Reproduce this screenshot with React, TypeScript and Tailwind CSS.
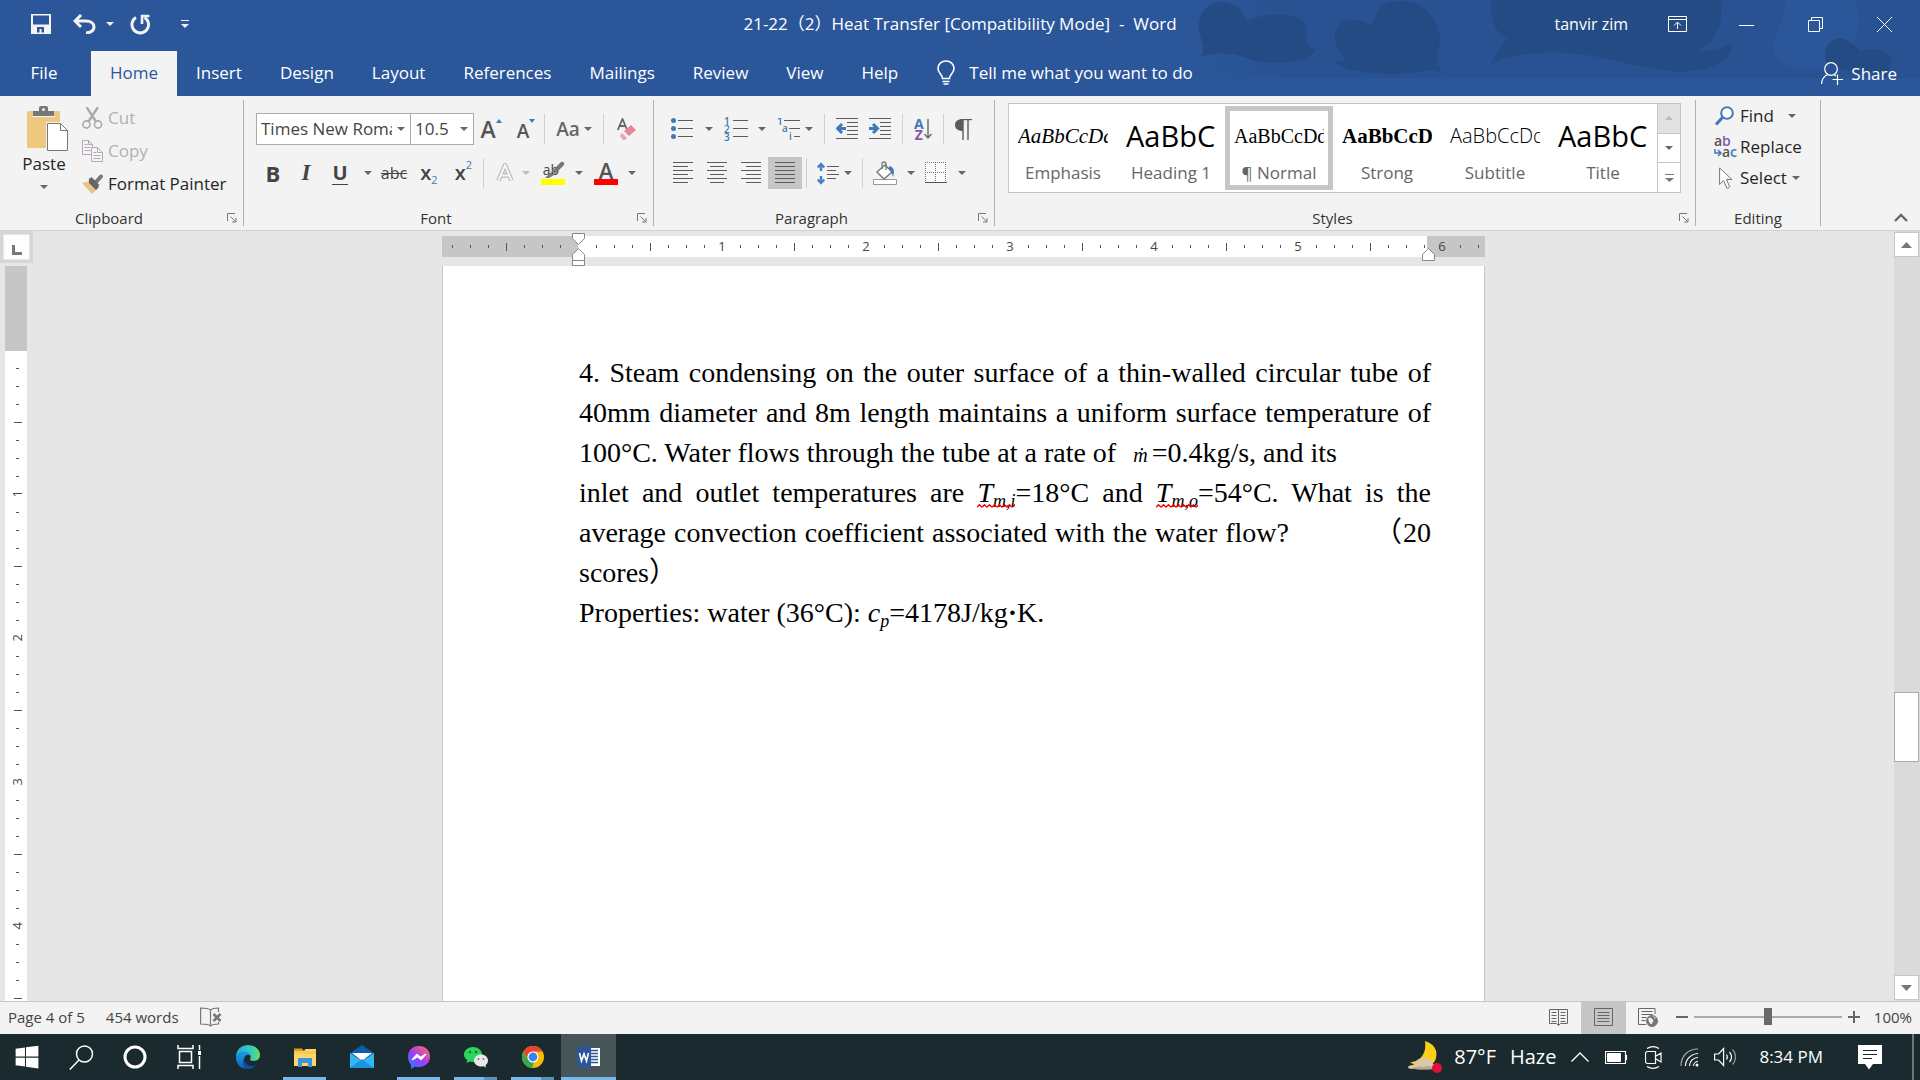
import { useState, type ReactNode } from 'react'
import { FaWindows } from 'react-icons/fa'

const TABS = ['Home', 'Insert', 'Design', 'Layout', 'References', 'Mailings', 'Review', 'View', 'Help']

const STYLES = [
  { name: 'Emphasis', sample: 'AaBbCcDd', cls: 'font-["Liberation_Serif",serif] italic text-[21px]' },
  { name: 'Heading 1', sample: 'AaBbCc', cls: 'text-[29px]' },
  { name: '¶ Normal', sample: 'AaBbCcDd', cls: 'font-["Liberation_Serif",serif] text-[20px]' },
  { name: 'Strong', sample: 'AaBbCcD', cls: 'font-["Liberation_Serif",serif] font-bold text-[21px]' },
  { name: 'Subtitle', sample: 'AaBbCcDd', cls: 'font-light text-[20px]' },
  { name: 'Title', sample: 'AaBbCc', cls: 'text-[29px]' },
]

const rowCls = 'flex items-center h-8'

function Caret({ className = 'text-[#666]' }: { className?: string }) {
  return (
    <svg width="8" height="4" viewBox="0 0 8 4" className={`shrink-0 ${className}`} fill="currentColor">
      <path d="M0 0h8L4 4z" />
    </svg>
  )
}

function Sep() {
  return <div className="w-px h-[30px] bg-[#d0d0d0] shrink-0" />
}

function Tool({ label, className = '', children }: { label: string; className?: string; children: ReactNode }) {
  return (
    <button type="button" aria-label={label} className={`flex items-center shrink-0 h-8 ${className}`}>
      {children}
    </button>
  )
}

interface GroupProps {
  title: string
  className: string
  launcher?: boolean
  children: ReactNode
}

function Group({ title, className, launcher = true, children }: GroupProps) {
  return (
    <section className={`flex flex-col shrink-0 border-r border-[#b1b1b1] ${className}`}>
      <div className="flex-1 min-h-0">{children}</div>
      <div className="flex items-center h-4">
        <span className="flex-1 text-center text-[15px] leading-4 text-[#333]">{title}</span>
        {launcher && (
          <button type="button" aria-label={`${title} settings`} className="w-[25px] pl-[9px]">
            <svg width="10" height="10" viewBox="0 0 10 10" stroke="#777" fill="none">
              <path d="M.5 8V.5H8M3.5 3.5l5 5M9 5v4H5" />
            </svg>
          </button>
        )}
      </div>
    </section>
  )
}

function Lines({ rows, width = 22 }: { rows: [number, number, number][]; width?: number }) {
  return (
    <svg width={width} height="22" viewBox={`0 0 ${width} 22`} stroke="#5c5c5c" shapeRendering="crispEdges">
      {rows.map(([x1, x2, y]) => (
        <path key={y} d={`M${x1} ${y}.5H${x2}`} />
      ))}
    </svg>
  )
}

/* ---------- title bar ---------- */

function TitleBar() {
  return (
    <div className="relative flex items-center justify-between h-[51px] pb-[3px]">
      <div className="flex items-center pl-[31px] text-white">
        <button type="button" aria-label="Save">
          <svg width="20" height="20" viewBox="0 0 20 20" fill="#f3f3f3">
            <path d="M0 0h20v20H0zM2 1.500v9h16v-9zM6 13v5.500h2.500V15h2v3.500H13V13z" fillRule="evenodd" />
          </svg>
        </button>
        <button type="button" aria-label="Undo" className="ml-[22px]">
          <svg width="23" height="20" viewBox="0 0 23 20" fill="none" stroke="#f3f3f3" strokeWidth="3">
            <path d="M8 1L2 7l6 6M2 7h11c5 0 8 2.500 8 6s-3 5.500-8 6" />
          </svg>
        </button>
        <button type="button" aria-label="Undo history" className="ml-[10px]"><Caret className="text-[#f3f3f3]" /></button>
        <button type="button" aria-label="Repeat" className="ml-[16px]">
          <svg width="21" height="21" viewBox="0 0 21 21" fill="none" stroke="#f3f3f3" strokeWidth="3">
            <path d="M6 3.500a8.300 8.300 0 1 0 8.500 0" />
            <path d="M19.500 2H12v8" strokeWidth="2.600" />
          </svg>
        </button>
        <button type="button" aria-label="Customize toolbar" className="ml-[30px]">
          <svg width="8" height="8" viewBox="0 0 8 8" fill="#f3f3f3"><path d="M0 0h8v1H0zM0 4h8L4 8z" /></svg>
        </button>
      </div>
      <div className="absolute inset-x-0 top-0 h-12 flex items-center justify-center pointer-events-none text-[17px] text-white whitespace-pre">
        21-22（2）Heat Transfer [Compatibility Mode]  -  Word
      </div>
      <div className="flex items-center pr-[28px] text-white text-[16px]">
        <span>tanvir zim</span>
        <button type="button" aria-label="Ribbon display options" className="ml-[40px]">
          <svg width="19" height="16" viewBox="0 0 19 16" fill="none" stroke="white">
            <path d="M.5.5h18v15H.5zM.5 3.500h18M9.500 13V6.500M6 9.500l3.500-3.500L13 9.500" />
          </svg>
        </button>
        <button type="button" aria-label="Minimize" className="ml-[52px]">
          <svg width="15" height="15" viewBox="0 0 15 15" stroke="white"><path d="M0 8.500h15" /></svg>
        </button>
        <button type="button" aria-label="Restore" className="ml-[54px]">
          <svg width="15" height="15" viewBox="0 0 15 15" fill="none" stroke="white">
            <path d="M.5 3.500h11v11H.5zM3.500 3.500v-3h11v11h-3" />
          </svg>
        </button>
        <button type="button" aria-label="Close" className="ml-[54px]">
          <svg width="15" height="15" viewBox="0 0 15 15" stroke="white"><path d="M0 0l15 15M15 0L0 15" /></svg>
        </button>
      </div>
    </div>
  )
}

function Clouds() {
  return (
    <svg width="730" height="78" viewBox="0 0 730 78" className="absolute right-0 top-0" fill="#254b85">
      <defs>
        <linearGradient id="haze" x1="0" x2="1">
          <stop offset="0" stopColor="#2b579a" />
          <stop offset=".15" stopColor="#285291" />
          <stop offset="1" stopColor="#285291" />
        </linearGradient>
      </defs>
      <path d="M0 0h730v78H0z" fill="url(#haze)" />
      <path d="M10 57c6-8 3-12 0-22C4 12 22-4 42 4c10 4 12 14 16 16 20-8 50-8 58 4 0 16-2 22 10 26-8 12-40 16-64 10-20-8-34-8-52-3z" />
      <path d="M144 60c4 2 8 2 12-1-14-12-16-34 0-38 10-3 20 0 24 5 8-8 4-22 26-25 30-4 52 26 41 52 0 8 2 14 5 20-14-6-26 2-52 1-30-1-50-4-56-14z" />
      <path d="M302 0h228c4 20-2 42-22 50 14 2 24-2 34-7 1 12-14 26-40 28-50 4-90-22-150-18-20 1-38 4-51 12 4-10 8-16 16-26-12-6-18-22-15-39z" />
      <path d="M595 0h70c10 20 0 50-16 62-20 14-64 8-66-12-2-16 14-30 12-50z" fill="#2b579a" />
      <path d="M636 62c-4-22 12-28 24-20 6 4 8 6 10 10 10-6 24-2 30 4 4 6-2 14-4 22-14-8-40-2-60-16z" />
    </svg>
  )
}

function TabStrip() {
  const [active, setActive] = useState('Home')
  return (
    <nav className="relative flex items-stretch h-[45px] text-[17px] text-white">
      <button type="button" className="w-[88px] mr-[3px] pb-[2px]">File</button>
      {TABS.map(t => (
        <button
          key={t}
          type="button"
          onClick={() => setActive(t)}
          className={`px-[19px] pb-[2px] ${t === active ? 'bg-[#f3f3f3] text-[#2b579a]' : ''}`}
        >
          {t}
        </button>
      ))}
      <button type="button" className="flex items-center gap-[14px] ml-5 pb-[2px]">
        <svg width="18" height="25" viewBox="0 0 18 25" fill="none" stroke="white" strokeWidth="1.600">
          <path d="M5.500 18.500c0-4-4.500-5-4.500-10C1 4 4.500 1 9 1s8 3 8 7.500c0 5-4.500 6-4.500 10zM5.500 21.500h7M6.500 24h5" />
        </svg>
        Tell me what you want to do
      </button>
      <button type="button" className="flex items-center gap-2 ml-auto pr-[23px]">
        <svg width="22" height="23" viewBox="0 0 22 23" fill="none" stroke="white" strokeWidth="1.200">
          <circle cx="10" cy="7" r="6.300" />
          <path d="M.6 22c0-5 3-8 6-9.500M13 12.500l2 1.500M16.500 12.500v10.500M11.500 17.500H22" />
        </svg>
        Share
      </button>
    </nav>
  )
}

/* ---------- ribbon ---------- */

function ClipboardGroup() {
  return (
    <Group title="Clipboard" className="w-[244px]">
      <div className="flex pt-px">
        <button type="button" className="flex flex-col items-center w-[82px] pl-[6px] pt-[5px] text-[17px] leading-[24px] text-[#262626]">
          <svg width="50" height="46" viewBox="-8 0 50 46" fill="none">
            <rect x="0" y="5" width="33" height="37" rx="1.500" fill="#edc87e" />
            <path d="M6 10V5h6V2a2 2 0 0 1 2-2h5a2 2 0 0 1 2 2v3h6v5z" fill="#777" />
            <path d="M5 10.500h23" stroke="#f3f3f3" />
            <circle cx="16.500" cy="3.500" r="1.500" fill="#f3f3f3" />
            <path d="M19 16h22v30H19z" fill="#f3f3f3" />
            <path d="M20.500 17.500h13l7 7v20h-20z" fill="white" stroke="#777" />
            <path d="M33.500 17.500v7h7" stroke="#777" />
          </svg>
          Paste
          <span className="mt-[9px]"><Caret /></span>
        </button>
        <div className="flex flex-col text-[17px] text-[#262626]">
          <button type="button" disabled className="flex items-center gap-[5px] h-[33px] text-[#b1b1b1]">
            <svg width="21" height="22" viewBox="0 0 21 22" fill="none" stroke="#aaa" strokeWidth="1.600">
              <circle cx="4.500" cy="17.500" r="3.600" /><circle cx="16" cy="17.500" r="3.600" />
              <path d="M4.500 0l9.500 14.500M16 0L6.500 14.500" strokeWidth="2.400" />
            </svg>
            Cut
          </button>
          <button type="button" disabled className="flex items-center gap-[5px] h-[33px] text-[#b1b1b1]">
            <svg width="21" height="22" viewBox="0 0 21 22" fill="#f7f2f8" stroke="#b3a9b6">
              <path d="M.5.500h6l4 4v10H.500zM6.500.500v4h4M2.500 4.500h3M2.500 7.500h6M2.500 10.500h6" />
              <path d="M9.500 7.500h6l5 5v9h-11zM15.500 7.500v5h5M11.500 12.500h3M11.500 15.500h7M11.500 18.500h7" />
            </svg>
            Copy
          </button>
          <button type="button" className="flex items-center gap-[5px] h-[33px]">
            <svg width="21" height="20" viewBox="0 0 21 20">
              <path d="M0 9l8-2 8 7-6 6z" fill="#ebc382" />
              <path d="M7 4l10 9-3 3L7 9z" fill="#666" />
              <path d="M13.500 8.500L19 2.500" stroke="#777" strokeWidth="4" strokeLinecap="round" />
              <path d="M8 4.500l8 8" stroke="#666" strokeWidth="4" />
            </svg>
            Format Painter
          </button>
        </div>
      </div>
    </Group>
  )
}

function FontGroup() {
  return (
    <Group title="Font" className="w-[410px]">
      <div className="flex flex-col gap-3 pt-[13px] pl-3">
        <div className={rowCls}>
          <div className="relative flex items-center w-[155px]">
            <select aria-label="Font" className="appearance-none w-full h-8 pl-1 pr-[18px] bg-white border border-[#ababab] text-[17px] text-[#444]">
              <option>Times New Roman</option>
            </select>
            <span className="absolute right-[6px] pointer-events-none"><Caret /></span>
          </div>
          <div className="relative flex items-center w-[64px] -ml-px">
            <select aria-label="Font size" className="appearance-none w-full h-8 pl-1 bg-white border border-[#ababab] text-[17px] text-[#444]">
              <option>10.5</option>
            </select>
            <span className="absolute right-[6px] pointer-events-none"><Caret /></span>
          </div>
          <Tool label="Grow font" className="w-[34px] justify-center font-semibold text-[#555]">
            <span className="text-[23px] leading-8">A</span>
            <svg width="6" height="20" viewBox="0 0 6 20" fill="#3b7abf"><path d="M0 4h6L3 0z" /></svg>
          </Tool>
          <Tool label="Shrink font" className="w-[36px] justify-center font-semibold text-[#555]">
            <span className="text-[19px] leading-8 pt-1">A</span>
            <svg width="6" height="20" viewBox="0 0 6 20" fill="#3b7abf"><path d="M0 0h6L3 4z" /></svg>
          </Tool>
          <Sep />
          <Tool label="Change case" className="w-[58px] justify-center gap-1 text-[19px] font-semibold text-[#666]">
            Aa<Caret />
          </Tool>
          <Sep />
          <Tool label="Clear formatting" className="w-[46px] justify-center">
            <svg width="20" height="22" viewBox="0 0 20 22" fill="none">
              <path d="M.8 12L5.500 1l4.200 10M2.500 8h6" stroke="#666" strokeWidth="1.800" />
              <path d="M14 7l5 5-7 6-5-5z" fill="#e8849a" />
              <path d="M5 15l5 5-2 2H6l-3-4z" fill="#eda3b3" />
            </svg>
          </Tool>
        </div>
        <div className={`${rowCls} text-[#444]`}>
          <Tool label="Bold" className="w-[34px] justify-center text-[22px] font-bold">B</Tool>
          <Tool label="Italic" className="w-[32px] justify-center text-[23px] font-bold italic font-['Liberation_Serif',serif]">I</Tool>
          <Tool label="Underline" className="w-[36px] justify-center">
            <span className="text-[20px] leading-[22px] font-bold border-b border-[#444]">U</span>
          </Tool>
          <Tool label="Underline style" className="w-[20px] justify-center"><Caret /></Tool>
          <Tool label="Strikethrough" className="w-[32px] justify-center text-[16px] line-through">abc</Tool>
          <Tool label="Subscript" className="w-[38px] justify-center">
            <span className="text-[20px] font-semibold">x</span><span className="pt-[14px] text-[11px] text-[#3b7abf]">2</span>
          </Tool>
          <Tool label="Superscript" className="w-[31px] justify-center">
            <span className="text-[20px] font-semibold">x</span><span className="pb-[16px] text-[11px] text-[#3b7abf]">2</span>
          </Tool>
          <div className="flex items-center pl-1">
            <Sep />
            <Tool label="Text effects" className="w-[57px] justify-center gap-2">
              <svg width="18" height="20" viewBox="0 0 18 20" fill="none" strokeLinejoin="round">
                <path d="M2.500 17.500L9 2l6.500 15.500M5 12.500h8" stroke="#bbb" strokeWidth="4.500" />
                <path d="M2.500 17.500L9 2l6.500 15.500M5 12.500h8" stroke="#f6f6f6" strokeWidth="2" />
              </svg>
              <Caret className="text-[#bbb]" />
            </Tool>
            <Tool label="Highlight color" className="w-[42px] justify-between">
              <span className="relative flex flex-col">
                <span className="text-[14px] leading-[18px] pr-1">ab</span>
                <span className="w-6 h-[6px] bg-[#ff0]" />
                <svg width="20" height="18" viewBox="0 0 20 18" className="absolute left-1 top-0" fill="#777">
                  <path d="M7 10L16 1c2-1 4 1 3 3l-9 9zM6 11l3 3-5 3H0z" />
                </svg>
              </span>
              <Caret />
            </Tool>
            <Tool label="Font color" className="w-[42px] ml-[11px] justify-between">
              <span className="flex flex-col items-center">
                <span className="text-[22px] leading-[18px] font-semibold text-[#555]">A</span>
                <span className="w-6 h-[6px] bg-[#f00]" />
              </span>
              <Caret />
            </Tool>
          </div>
        </div>
      </div>
    </Group>
  )
}

function ParagraphGroup() {
  return (
    <Group title="Paragraph" className="w-[341px]">
      <div className="flex flex-col gap-3 pt-[13px] pl-3">
        <div className={`${rowCls} gap-[11px] pl-[5px]`}>
          <Tool label="Bullets" className="w-[42px] justify-between">
            <svg width="22" height="22" viewBox="0 0 22 22" stroke="#5c5c5c">
              <path d="M7 2.500h15M7 10.500h15M7 18.500h15" />
              <g fill="#3f7ab8" stroke="none"><circle cx="2.500" cy="2.500" r="2.500" /><circle cx="2.500" cy="10.500" r="2.500" /><circle cx="2.500" cy="18.500" r="2.500" /></g>
            </svg>
            <Caret />
          </Tool>
          <Tool label="Numbering" className="w-[42px] justify-between">
            <span className="flex items-center gap-[3px] text-[10px] leading-[8px] font-semibold text-[#3f7ab8]">
              <span className="flex flex-col">
                <span>1</span><span>2</span><span>3</span>
              </span>
              <Lines width={15} rows={[[0, 15, 2], [0, 15, 10], [0, 15, 18]]} />
            </span>
            <Caret />
          </Tool>
          <Tool label="Multilevel list" className="w-[36px] justify-between">
            <svg width="23" height="22" viewBox="0 0 23 22" className="font-semibold text-[10px]">
              <g fill="#3f7ab8"><text x="0" y="7">1</text><text x="5" y="14">a</text><text x="12" y="22">i</text></g>
              <path d="M7 2.500h16M12 10.500h11M17 18.500h6" stroke="#5c5c5c" />
            </svg>
            <Caret />
          </Tool>
          <Sep />
          <Tool label="Decrease indent">
            <svg width="22" height="22" viewBox="0 0 22 22" stroke="#5c5c5c">
              <path d="M0 .500h22M11 4.500h11M11 8.500h11M11 12.500h11M11 16.500h11M0 20.500h22" />
              <path d="M10 10.500H2M6 6l-4.500 4.500L6 15" stroke="#3f7ab8" strokeWidth="3" fill="none" />
            </svg>
          </Tool>
          <Tool label="Increase indent">
            <svg width="22" height="22" viewBox="0 0 22 22" stroke="#5c5c5c">
              <path d="M0 .500h22M11 4.500h11M11 8.500h11M11 12.500h11M11 16.500h11M0 20.500h22" />
              <path d="M0 10.500h8M4 6l4.500 4.500L4 15" stroke="#3f7ab8" strokeWidth="3" fill="none" />
            </svg>
          </Tool>
          <Sep />
          <Tool label="Sort">
            <span className="flex flex-col text-[14px] leading-[11px] font-bold">
              <span className="text-[#3f7ab8]">A</span><span className="text-[#8a55b0]">Z</span>
            </span>
            <svg width="8" height="22" viewBox="0 0 8 22" stroke="#666" fill="none" strokeWidth="1.400">
              <path d="M4 1v19M.500 16L4 20l3.500-4" />
            </svg>
          </Tool>
          <Sep />
          <Tool label="Show formatting marks">
            <svg width="17" height="21" viewBox="0 0 17 21">
              <path d="M17 .600H7" stroke="#5c5c5c" strokeWidth="1.200" />
              <path d="M8 0v12C2.500 12 0 9.500 0 6s2.500-6 8-6z" fill="#5c5c5c" />
              <path d="M8 0v21M13 0v21" stroke="#5c5c5c" strokeWidth="1.400" />
            </svg>
          </Tool>
        </div>
        <div className={rowCls}>
          <Tool label="Align left" className="w-[34px] justify-center">
            <Lines width={20} rows={[[0, 20, 0], [0, 15, 4], [0, 20, 8], [0, 15, 12], [0, 20, 16], [0, 15, 20]]} />
          </Tool>
          <Tool label="Center" className="w-[34px] justify-center">
            <Lines width={20} rows={[[0, 20, 0], [3, 17, 4], [0, 20, 8], [3, 17, 12], [0, 20, 16], [3, 17, 20]]} />
          </Tool>
          <Tool label="Align right" className="w-[34px] justify-center">
            <Lines width={20} rows={[[0, 20, 0], [5, 20, 4], [0, 20, 8], [5, 20, 12], [0, 20, 16], [5, 20, 20]]} />
          </Tool>
          <Tool label="Justify" className="w-[34px] justify-center bg-[#c6c6c6]">
            <Lines width={20} rows={[[0, 20, 0], [0, 20, 4], [0, 20, 8], [0, 20, 12], [0, 20, 16], [0, 20, 20]]} />
          </Tool>
          <div className="flex items-center gap-[10px] pl-1">
            <Sep />
            <Tool label="Line spacing" className="w-[35px] justify-between">
              <svg width="22" height="23" viewBox="0 0 22 23">
                <path d="M10 4.500h12M10 8.500h9M10 12.500h12M10 16.500h9" stroke="#5c5c5c" />
                <path d="M4 2v7M4 14v7M.700 5.500L4 2l3.300 3.500M.700 17.500L4 21l3.300-3.500" stroke="#4a80c4" strokeWidth="2.400" fill="none" />
              </svg>
              <Caret />
            </Tool>
            <Sep />
            <Tool label="Shading" className="w-[42px] justify-between">
              <svg width="24" height="24" viewBox="0 0 24 24" fill="none" stroke="#777">
                <path d="M4 11l8-7 7 7-8 7z" fill="white" strokeWidth="1.400" />
                <path d="M9 8V2.500C9 .500 13 .500 13 2.500V9" strokeWidth="1.300" />
                <path d="M16 5c5 1 6 5 4 11-1-3-1-5-4-8z" fill="#3f7ab8" stroke="none" />
                <path d="M.500 18.500h23v5H.500z" fill="white" stroke="#999" />
              </svg>
              <Caret />
            </Tool>
            <Tool label="Borders" className="w-[41px] justify-between">
              <svg width="22" height="22" viewBox="0 0 22 22" fill="none" stroke="#777">
                <path d="M0 0h22v21H0z" fill="#fafafa" stroke="none" />
                <path d="M0 .500h22M0 10.500h22M.500 0v21M10.500 0v21M20.500 0v21" strokeDasharray="1 1" />
                <path d="M0 20.500h22" stroke="#555" />
              </svg>
              <Caret />
            </Tool>
          </div>
        </div>
      </div>
    </Group>
  )
}

function StylesGroup() {
  return (
    <Group title="Styles" className="w-[701px]">
      <div className="flex mt-[3px] ml-[13px] mr-[14px] h-[90px] border border-[#c6c6c6] bg-white">
        {STYLES.map(s => (
          <button
            key={s.name}
            type="button"
            className={`flex flex-col items-center w-[108px] my-[2px] text-[#666] ${s.name === '¶ Normal' ? 'outline-[5px] -outline-offset-5 outline-[#c6c6c6]' : ''}`}
          >
            <span className={`w-[90px] h-[44px] mt-[8px] overflow-hidden whitespace-nowrap text-left leading-[44px] text-black ${s.cls}`}>{s.sample}</span>
            <span className="text-[17px] leading-[30px]">{s.name}</span>
          </button>
        ))}
        <div className="flex flex-col w-[23px] ml-auto border-l border-[#c6c6c6]">
          <button type="button" aria-label="Previous styles" className="flex items-center justify-center flex-1 bg-[#e1e1e1]">
            <svg width="8" height="4" viewBox="0 0 8 4" fill="#bbb"><path d="M0 4h8L4 0z" /></svg>
          </button>
          <button type="button" aria-label="Next styles" className="flex items-center justify-center flex-1 border-y border-[#c6c6c6]"><Caret /></button>
          <button type="button" aria-label="More styles" className="flex items-center justify-center flex-1">
            <svg width="9" height="8" viewBox="0 0 9 8" fill="#777"><path d="M0 0h9v1H0zM0 4h9L4.500 8z" /></svg>
          </button>
        </div>
      </div>
    </Group>
  )
}

function EditingGroup() {
  const itemCls = 'flex items-center h-[31px] text-[17px] text-[#262626]'
  return (
    <Group title="Editing" launcher={false} className="w-[125px]">
      <div className="flex flex-col pl-[18px]">
        <button type="button" className={itemCls}>
          <span className="w-[26px]">
            <svg width="20" height="20" viewBox="0 0 20 20" fill="none" stroke="#3f7ab8">
              <circle cx="13" cy="7" r="5.800" fill="white" strokeWidth="2" /><path d="M8.500 11.500L2 18.500" strokeWidth="3" />
            </svg>
          </span>
          Find<span className="ml-[14px]"><Caret /></span>
        </button>
        <button type="button" className={itemCls}>
          <span className="w-[26px]">
            <svg width="24" height="22" viewBox="0 0 24 22" className="text-[14px] font-semibold">
              <text x="0" y="10" fill="#555">a</text><text x="8" y="10" fill="#8a55b0">b</text>
              <text x="8" y="21" fill="#555">a</text><text x="16" y="21" fill="#3f7ab8">c</text>
              <path d="M1 13v4h5M4 14l3 3-3 3" stroke="#3f7ab8" strokeWidth="1.500" fill="none" />
            </svg>
          </span>
          Replace
        </button>
        <button type="button" className={itemCls}>
          <span className="w-[26px] pl-[5px]">
            <svg width="14" height="22" viewBox="0 0 14 22" fill="white" stroke="#777">
              <path d="M.600 1v16.500l4-4 3.200 7.500c1.500.500 3-.500 2.500-2L7.500 12.500h5.500z" />
            </svg>
          </span>
          Select<span className="ml-[5px]"><Caret /></span>
        </button>
      </div>
    </Group>
  )
}

function Ribbon() {
  return (
    <div className="flex h-[135px] pt-1 pb-1 bg-[#f3f3f3] border-b border-[#d2d2d2]">
      <ClipboardGroup />
      <FontGroup />
      <ParagraphGroup />
      <StylesGroup />
      <EditingGroup />
      <button type="button" aria-label="Collapse ribbon" className="self-end ml-auto mr-3 mb-[4px]">
        <svg width="14" height="9" viewBox="0 0 14 9" fill="none" stroke="#666" strokeWidth="2.400"><path d="M1 8l6-6 6 6" /></svg>
      </button>
    </div>
  )
}

/* ---------- document ---------- */

// one cell per eighth of an inch, centred on its tick
function HorizontalRuler() {
  const cells = Array.from({ length: 58 }, (_, i) => i - 7)
  return (
    <div className="relative w-[1043px] h-[21px] mt-[5px] bg-[linear-gradient(to_right,#c6c6c6_136px,#fff_136px,#fff_985px,#c6c6c6_985px)]">
      <div className="flex h-full pl-px overflow-hidden text-[13px] text-[#444]">
        {cells.map(i => (
          <span key={i} className="flex items-center justify-center w-[18px] shrink-0">
            {i === 0 ? null : i % 8 === 0 && i > 0 ? i / 8 : <i className={i % 4 === 0 ? 'w-px h-2 bg-[#555]' : 'w-px h-[3px] bg-[#555]'} />}
          </span>
        ))}
      </div>
      <svg width="13" height="33" viewBox="0 0 13 33" className="absolute left-[130px] -top-[3px]" fill="white" stroke="#888">
        <path d="M.500.500h12v5l-6 6-6-6zM.500 27.500v-6l6-6 6 6v6zM.500 27.500h12v5H.500z" />
      </svg>
      <svg width="13" height="13" viewBox="0 0 13 13" className="absolute left-[980px] top-[12px]" fill="white" stroke="#888">
        <path d="M.500 12.500v-6l6-6 6 6v6z" />
      </svg>
    </div>
  )
}

function VerticalRuler() {
  const cells = Array.from({ length: 36 }, (_, i) => i + 1)
  return (
    <div className="flex flex-col w-[33px] shrink-0">
      <div className="p-[3px] h-[32px] shrink-0 bg-[#d6d6d6]">
        <button type="button" aria-label="Tab stop" className="flex items-center justify-center w-[27px] h-[26px] border border-[#e6e6e6] bg-[#fdfdfd]">
          <svg width="10" height="10" viewBox="0 0 10 10" className="mt-[5px]"><path d="M1.500 0v8.500H10" stroke="#777" strokeWidth="3" fill="none" /></svg>
        </button>
      </div>
      <div className="flex-1 min-h-0 flex flex-col mt-[3px] ml-[5px] w-[22px] bg-white overflow-hidden text-[13px] text-[#444]">
        <div className="h-[85px] shrink-0 bg-[#c6c6c6]" />
        <div className="flex flex-col pt-[8px]">
          {cells.map(i => (
            <span key={i} className="flex items-center justify-center h-[18px] pl-[3px] shrink-0">
              {i % 8 === 0 ? <b className="font-normal -rotate-90">{i / 8}</b> : <i className={i % 4 === 0 ? 'h-px w-2 bg-[#555]' : 'h-px w-[3px] bg-[#555]'} />}
            </span>
          ))}
        </div>
      </div>
    </div>
  )
}

function Misspelled({ children }: { children: ReactNode }) {
  return (
    <span className="relative italic">
      {children}
      <svg height="4" className="absolute left-0 bottom-0 w-full" fill="none" stroke="#f00000" strokeWidth="1.300">
        <defs>
          <pattern id="squiggle" width="5" height="4" patternUnits="userSpaceOnUse">
            <path d="M0 3.300l2.500-2.600L5 3.300" />
          </pattern>
        </defs>
        <rect width="100%" height="4" fill="url(#squiggle)" stroke="none" />
      </svg>
    </span>
  )
}

const Sub = ({ children }: { children: ReactNode }) => <sub className="text-[18px] leading-none italic">{children}</sub>

function Page() {
  const lineCls = 'h-[40px] [text-align-last:justify]'
  return (
    <article className="flex-1 w-[1043px] mt-[9px] pt-[87px] pl-[136px] pr-[53px] bg-white border-x border-[#c6c6c6] font-['Liberation_Serif','Noto_Sans_CJK_SC',serif] text-[28px] leading-[40px] text-black whitespace-nowrap">
      <p className={lineCls}>4. Steam condensing on the outer surface of a thin-walled circular tube of</p>
      <p className={lineCls}>40mm diameter and 8m length maintains a uniform surface temperature of</p>
      <p className="h-[40px]">100°C. Water flows through the tube at a rate of&nbsp; <i className="ml-[3px] mr-1 text-[20px] leading-none">ṁ</i>=0.4kg/s, and its</p>
      <p className={lineCls}>
        inlet and outlet temperatures are <Misspelled>T<Sub>m,i</Sub></Misspelled>=18°C and <Misspelled>T<Sub>m,o</Sub></Misspelled>=54°C. What is the
      </p>
      <p className={lineCls}>average convection coefficient associated with the water flow?<span className="inline-block w-[84px]" />（20</p>
      <p className="h-[40px]">scores）</p>
      <p className="h-[40px]">Properties: water (36°C): <i>c</i><Sub>p</Sub>=4178J/kg<b>·</b>K.</p>
    </article>
  )
}

function ScrollBar() {
  return (
    <div className="flex flex-col w-[26px] shrink-0 py-px pr-px bg-[#dadada]">
      <button type="button" aria-label="Scroll up" className="flex items-center justify-center h-[25px] shrink-0 bg-white border border-[#c6c6c6]">
        <svg width="11" height="6" viewBox="0 0 11 6" fill="#777"><path d="M0 6h11L5.500 0z" /></svg>
      </button>
      <div className="flex-1 flex flex-col">
        <div className="grow-[435]" />
        <div className="h-[70px] bg-white border border-[#ababab]" />
        <div className="grow-[213]" />
      </div>
      <button type="button" aria-label="Scroll down" className="flex items-center justify-center h-[25px] shrink-0 bg-white border border-[#c6c6c6]">
        <svg width="11" height="6" viewBox="0 0 11 6" fill="#777"><path d="M0 0h11L5.500 6z" /></svg>
      </button>
    </div>
  )
}

function StatusBar() {
  const [zoom, setZoom] = useState(50)
  return (
    <div className="flex items-stretch h-[33px] shrink-0 px-2 bg-[#f3f3f3] border-t border-[#c6c6c6] text-[15px] text-[#444]">
      <div className="flex items-center gap-[21px] pb-[2px]">
        <span>Page 4 of 5</span>
        <span>454 words</span>
        <button type="button" aria-label="Proofing">
          <svg width="22" height="20" viewBox="0 0 22 20" fill="none" stroke="#777" strokeWidth="1.200">
            <path d="M10.500 19V3C9 1.500 7 1 .600 1v16c5 0 8 0 10 2M10.500 3C12 1.500 14 1 18.500 1v4M10.500 19c1.500-1.500 4-2 8-2v-2" />
            <path d="M13.500 7l7 7M20.500 7l-7 7" strokeWidth="2.600" />
          </svg>
        </button>
      </div>
      <div className="flex items-stretch ml-auto">
        <button type="button" aria-label="Read mode" className="flex items-center justify-center w-[45px] pb-[2px]">
          <svg width="19" height="18" viewBox="0 0 19 18" fill="none" stroke="#666">
            <path d="M9.500 17.500V1.500H.500v14h7l2 2 2-2h7v-14h-9M2.500 4.500h5M2.500 7.500h5M2.500 10.500h5M2.500 13.500h5M11.500 4.500h5M11.500 7.500h5M11.500 10.500h5M11.500 13.500h5" />
          </svg>
        </button>
        <button type="button" aria-label="Print layout" className="flex items-center justify-center w-[45px] pb-[2px] bg-[#c6c6c6]">
          <svg width="19" height="18" viewBox="0 0 19 18" fill="none" stroke="#666">
            <path d="M.500.500h18v17H.500zM3.500 4.500h12M3.500 7.500h12M3.500 10.500h12M3.500 13.500h12" />
          </svg>
        </button>
        <button type="button" aria-label="Web layout" className="flex items-center justify-center w-[45px] pb-[2px]">
          <svg width="20" height="19" viewBox="0 0 20 19" fill="none" stroke="#666">
            <path d="M17 6V.500H.500v16H8M3.500 3.500h11M3.500 6.500h11M3.500 9.500h5M3.500 12.500h4" />
            <circle cx="14" cy="13" r="5.500" fill="#777" stroke="#777" />
            <path d="M11 10l3 1 1 2-2 3-2-3zM15.500 8.500l2 2" fill="#f3f3f3" stroke="#f3f3f3" />
          </svg>
        </button>
      </div>
      <div className="flex items-center ml-[5px] pb-[2px]">
        <button type="button" aria-label="Zoom out"><svg width="12" height="12" viewBox="0 0 12 12"><path d="M0 6h12" stroke="#666" strokeWidth="2" /></svg></button>
        <input
          type="range"
          aria-label="Zoom"
          min={0}
          max={100}
          value={zoom}
          onChange={e => setZoom(Number(e.target.value))}
          className="appearance-none w-[148px] h-5 mx-[6px] bg-transparent [&::-webkit-slider-runnable-track]:h-[2px] [&::-webkit-slider-runnable-track]:bg-[#ababab] [&::-webkit-slider-thumb]:appearance-none [&::-webkit-slider-thumb]:w-2 [&::-webkit-slider-thumb]:h-[17px] [&::-webkit-slider-thumb]:-mt-2 [&::-webkit-slider-thumb]:bg-[#6a6a6a]"
        />
        <button type="button" aria-label="Zoom in"><svg width="12" height="12" viewBox="0 0 12 12"><path d="M0 6h12M6 0v12" stroke="#666" strokeWidth="2" /></svg></button>
        <span className="ml-[14px]">100%</span>
      </div>
    </div>
  )
}

/* ---------- taskbar ---------- */

const EdgeIcon = () => (
  <svg width="24" height="24" viewBox="0 0 24 24">
    <defs>
      <linearGradient id="edgeTop" x1="0" x2="1"><stop offset="0" stopColor="#2aa9e0" /><stop offset=".6" stopColor="#35c8c0" /><stop offset="1" stopColor="#6be05a" /></linearGradient>
      <linearGradient id="edgeBody" x1="0" y1="0" x2="0" y2="1"><stop offset="0" stopColor="#1b9de2" /><stop offset="1" stopColor="#0a63c4" /></linearGradient>
    </defs>
    <path d="M0 12C0 4 6 0 12 0c7 0 12 5 12 10 0 4-3 6-6.500 6-2 0-4-.8-3.500-1.700 1.500-2 1-6.300-5-6.300C4 8 1 10 0 12z" fill="url(#edgeTop)" />
    <path d="M0 12c1-4 4.500-6 9-5.500 3 .3 5 2 5.500 4-3-2-6.500 0-6.500 4 0 5 5 8 9 7-5 4-17 3-17-9.500z" fill="url(#edgeBody)" />
    <path d="M8 14c0 4 4 7 8 7 2 0 4-1 5.500-2.500C19 22 16 24 12.500 24 8 24 5 19 8 14z" fill="#0c4f9e" />
  </svg>
)

const ExplorerIcon = () => (
  <svg width="22" height="21" viewBox="0 0 22 21">
    <path d="M0 1.500h8l2 2.500H0z" fill="#e09c18" />
    <path d="M0 4h10l1.500-2H22v17H0z" fill="#ffd567" />
    <path d="M0 4h22v3H0z" fill="#f5bd37" opacity=".5" />
    <path d="M4 20v-9h14v9h-4v-4H8v4z" fill="#3a94dd" />
  </svg>
)

const MailIcon = () => (
  <svg width="24" height="24" viewBox="0 0 24 24">
    <path d="M0 8l12-8 12 8v3H0z" fill="#0f5da8" />
    <path d="M2 8h20l-10 8z" fill="white" />
    <path d="M0 8l12 8 12-8v15H0z" fill="#35b8f1" />
    <path d="M0 23L12 14l12 9z" fill="#1b95dd" />
  </svg>
)

const MessengerIcon = () => (
  <svg width="22" height="24" viewBox="0 0 22 24">
    <defs><linearGradient id="msg" x1="0" y1="1" x2=".8" y2="0"><stop offset="0" stopColor="#0a90ff" /><stop offset=".5" stopColor="#9a3cff" /><stop offset="1" stopColor="#ff6370" /></linearGradient></defs>
    <path d="M11 1c6.500 0 11 4.500 11 10.500S17.500 22 11 22c-1.500 0-2.500-.2-4-.6L3 24v-4.500C1 17.500 0 15 0 11.500 0 5.500 4.500 1 11 1z" fill="url(#msg)" />
    <path d="M4.500 14.500l4.500-5 3.500 3 5-3-4.500 5-3.500-3z" fill="white" stroke="white" strokeWidth="1.500" strokeLinejoin="round" />
  </svg>
)

const WeChatIcon = () => (
  <svg width="24" height="22" viewBox="0 0 24 22">
    <path d="M9 1c5 0 9 3.300 9 7.500S14 16 9 16c-1 0-2-.2-3-.4L2.500 17l.8-3C1.300 12.800 0 11 0 8.500 0 4.300 4 1 9 1z" fill="#2ad55e" />
    <circle cx="6" cy="6" r="1.200" fill="#166b36" /><circle cx="12" cy="6" r="1.200" fill="#166b36" />
    <path d="M17 8.500c4 0 7 2.700 7 6 0 2-1 3.500-2.500 4.700l.5 2.300-2.500-1.200c-5 1.200-9.500-1.800-9.500-5.800 0-3.300 3-6 7-6z" fill="#e8e8e8" />
    <circle cx="14.500" cy="13" r="1" fill="#777" /><circle cx="19.500" cy="13" r="1" fill="#777" />
  </svg>
)

const ChromeIcon = () => (
  <svg width="22" height="22" viewBox="0 0 22 22">
    <circle cx="11" cy="11" r="11" fill="#fbbc05" />
    <path d="M1.500 5.500a11 11 0 0 1 19 0H11a5.500 5.500 0 0 0-4.800 8.200z" fill="#ea4335" />
    <path d="M1.500 5.500l4.700 8.200A5.500 5.500 0 0 0 11 16.500h1L10 22A11 11 0 0 1 1.500 5.500z" fill="#34a853" />
    <circle cx="11" cy="11" r="5.500" fill="white" /><circle cx="11" cy="11" r="4.400" fill="#3b82f0" />
  </svg>
)

const WordIcon = () => (
  <svg width="24" height="24" viewBox="0 0 24 24">
    <path d="M12 3h11v18H12z" fill="white" />
    <path d="M13 5.500h8M13 8.500h8M13 11.500h8M13 14.500h8M13 17.500h8" stroke="#2b579a" strokeWidth="1.400" />
    <path d="M0 2.500L14 0v24L0 21.500z" fill="#2b579a" />
    <path d="M2.500 8l2 8L7 9l2.500 7 2-8" stroke="white" strokeWidth="1.600" fill="none" />
  </svg>
)

const APPS = [
  { name: 'Edge', icon: <EdgeIcon />, running: 0 },
  { name: 'File Explorer', icon: <ExplorerIcon />, running: 1 },
  { name: 'Mail', icon: <MailIcon />, running: 0 },
  { name: 'Messenger', icon: <MessengerIcon />, running: 1 },
  { name: 'WeChat', icon: <WeChatIcon />, running: 2 },
  { name: 'Chrome', icon: <ChromeIcon />, running: 2 },
]

function Taskbar() {
  const sysCls = 'flex items-center justify-center w-[54px]'
  return (
    <footer className="flex items-stretch h-[46px] shrink-0 bg-[#1a2a2e] text-white">
      <button type="button" aria-label="Start" className={sysCls}><FaWindows size={26} /></button>
      <button type="button" aria-label="Search" className={sysCls}>
        <svg width="25" height="25" viewBox="0 0 25 25" fill="none" stroke="white" strokeWidth="1.500"><circle cx="15.500" cy="9" r="8" /><path d="M10 15L.800 24.500" /></svg>
      </button>
      <button type="button" aria-label="Cortana" className={sysCls}>
        <svg width="24" height="24" viewBox="0 0 24 24" fill="none" stroke="white" strokeWidth="3"><circle cx="12" cy="12" r="10" /></svg>
      </button>
      <button type="button" aria-label="Task view" className={sysCls}>
        <svg width="25" height="24" viewBox="0 0 25 24" fill="none" stroke="white" strokeWidth="1.500">
          <path d="M1 0v3.500h15V0M1 24v-3.500h15V24M2.500 6.500h12v11h-12zM22.500 0v5M22.500 11v13" /><path d="M22.500 6v4" strokeWidth="3" />
        </svg>
      </button>
      <div className="flex items-stretch ml-[3px]">
        {APPS.map(a => (
          <button key={a.name} type="button" aria-label={a.name} className="flex flex-col items-center w-[57px]">
            <span className="flex-1 flex items-center pt-[3px]">{a.icon}</span>
            <span className="flex h-[3px] w-[43px]">
              {a.running > 0 && <span className="flex-1 bg-[#76b9ed]" />}
              {a.running > 1 && <span className="w-[13px] bg-[#5a8fb9]" />}
            </span>
          </button>
        ))}
        <button type="button" aria-label="Word" className="flex flex-col items-center w-[55px] bg-[#475558]">
          <span className="flex-1 flex items-center pt-[3px]"><WordIcon /></span>
          <span className="h-[3px] w-full bg-[#76b9ed]" />
        </button>
      </div>
      <div className="flex items-center ml-auto pr-[6px]">
        <button type="button" className="flex items-center text-[20px]">
          <svg width="34" height="32" viewBox="0 0 34 32">
            <path d="M17 0c9 3 13 9 11 17-2 9-15 13-26 4 9 0 17-7 15-21z" fill="#fbd019" />
            <path d="M0 27c0-3 4-3 6-3 1-5 7-8 12-7s7 4 7 6c4 0 6 2 5 4s-26 2-30 0z" fill="#dcc7a8" />
            <path d="M3 28c3-3 10-3 13-2 4-2 9-1 11 2z" fill="#b9a78e" />
            <circle cx="29" cy="27" r="5" fill="#e0123a" />
          </svg>
          <span className="ml-[12px]">87°F</span>
          <span className="ml-[14px]">Haze</span>
        </button>
        <button type="button" aria-label="Hidden icons" className="ml-[15px]">
          <svg width="18" height="10" viewBox="0 0 18 10" fill="none" stroke="white" strokeWidth="1.300"><path d="M.500 9.500L9 1l8.500 8.500" /></svg>
        </button>
        <svg width="23" height="13" viewBox="0 0 23 13" fill="none" stroke="white" className="ml-[16px]">
          <path d="M.500.500h20v12H.500zM21.500 4v5" strokeWidth="1.200" /><path d="M2.500 2.500h13v8h-13z" fill="white" />
        </svg>
        <svg width="17" height="23" viewBox="0 0 17 23" fill="none" stroke="white" strokeWidth="1.200" className="ml-[17px]">
          <path d="M2.500 5.500h8v12h-8a2 2 0 0 1-2-2v-8a2 2 0 0 1 2-2zM11 10l5-3v9l-5-3M2 2.500c4-2.500 8-2.500 12 0M2 20.500c4 2.500 8 2.500 12 0" />
        </svg>
        <svg width="19" height="19" viewBox="0 0 19 19" fill="none" stroke="white" strokeWidth="1.200" className="ml-[18px]">
          <path d="M1 18C1 8 8 1 18 1" opacity=".6" /><path d="M5.500 18C5.500 11 11 6 18 5.500M9.500 18c0-5 4-8.500 8.500-8.500M13.500 18c0-2.500 2-4.500 4.500-4.500" /><circle cx="17" cy="17" r="1.500" fill="white" stroke="none" />
        </svg>
        <svg width="23" height="20" viewBox="0 0 23 20" fill="none" stroke="white" strokeWidth="1.200" className="ml-[15px]">
          <path d="M.600 7h4l5-5.500v17L4.600 13h-4z" /><path d="M12.500 7.500c1 1.500 1 3.500 0 5M15.500 5c2.500 3 2.500 7 0 10" /><path d="M18.500 2.500c4 4 4 11 0 15" opacity=".5" />
        </svg>
        <time className="ml-[22px] text-[17px]">8:34 PM</time>
        <button type="button" aria-label="Notifications" className="ml-[35px]">
          <svg width="24" height="25" viewBox="0 0 24 25"><path d="M0 0h24v19H15l-4 5.500L7 19H0z" fill="white" /><path d="M5 5.500h14M5 9.500h14M5 13.500h9" stroke="#1a2a2e" /></svg>
        </button>
        <span className="w-[2px] h-[46px] ml-[30px] bg-[#6b7679]" />
      </div>
    </footer>
  )
}

export default function App() {
  return (
    <div className="flex flex-col h-screen overflow-hidden bg-[#e6e6e6] font-['Open_Sans','Noto_Sans_CJK_SC',sans-serif]">
      <header className="relative shrink-0 bg-[#2b579a]">
        <Clouds />
        <TitleBar />
        <TabStrip />
      </header>
      <Ribbon />
      <main className="flex flex-1 min-h-0">
        <VerticalRuler />
        <div className="flex-1 min-w-0 flex flex-col items-center">
          <HorizontalRuler />
          <Page />
        </div>
        <ScrollBar />
      </main>
      <StatusBar />
      <Taskbar />
    </div>
  )
}
